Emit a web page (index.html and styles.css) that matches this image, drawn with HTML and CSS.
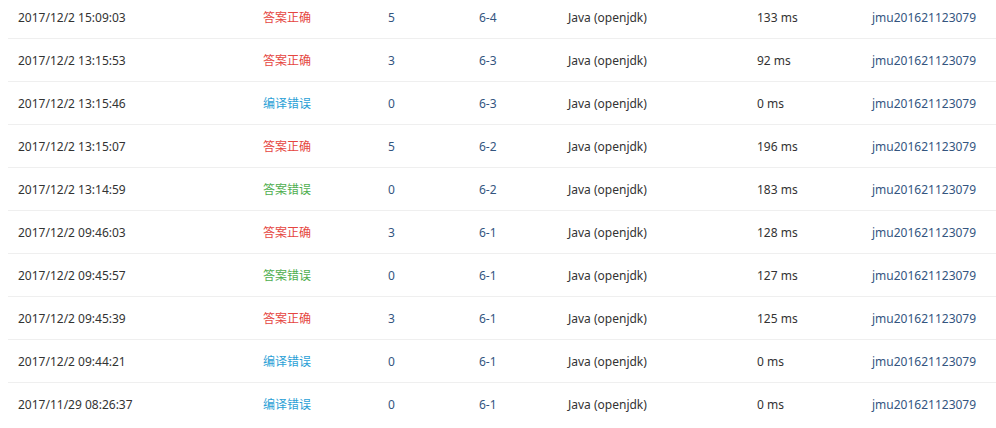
FILE: index.html
```html
<!DOCTYPE html>
<html>
<head>
<meta charset="utf-8">
<link rel="stylesheet" href="styles.css">
</head>
<body>
<div class="table">
  <div class="row"><span class="cell time">2017/12/2 15:09:03</span><span class="cell status ok">答案正确</span><span class="cell link">5</span><span class="cell link">6-4</span><span class="cell">Java (openjdk)</span><span class="cell">133 ms</span><span class="cell link">jmu201621123079</span></div>
  <div class="row"><span class="cell time">2017/12/2 13:15:53</span><span class="cell status ok">答案正确</span><span class="cell link">3</span><span class="cell link">6-3</span><span class="cell">Java (openjdk)</span><span class="cell">92 ms</span><span class="cell link">jmu201621123079</span></div>
  <div class="row"><span class="cell time">2017/12/2 13:15:46</span><span class="cell status ce">编译错误</span><span class="cell link">0</span><span class="cell link">6-3</span><span class="cell">Java (openjdk)</span><span class="cell">0 ms</span><span class="cell link">jmu201621123079</span></div>
  <div class="row"><span class="cell time">2017/12/2 13:15:07</span><span class="cell status ok">答案正确</span><span class="cell link">5</span><span class="cell link">6-2</span><span class="cell">Java (openjdk)</span><span class="cell">196 ms</span><span class="cell link">jmu201621123079</span></div>
  <div class="row"><span class="cell time">2017/12/2 13:14:59</span><span class="cell status wa">答案错误</span><span class="cell link">0</span><span class="cell link">6-2</span><span class="cell">Java (openjdk)</span><span class="cell">183 ms</span><span class="cell link">jmu201621123079</span></div>
  <div class="row"><span class="cell time">2017/12/2 09:46:03</span><span class="cell status ok">答案正确</span><span class="cell link">3</span><span class="cell link">6-1</span><span class="cell">Java (openjdk)</span><span class="cell">128 ms</span><span class="cell link">jmu201621123079</span></div>
  <div class="row"><span class="cell time">2017/12/2 09:45:57</span><span class="cell status wa">答案错误</span><span class="cell link">0</span><span class="cell link">6-1</span><span class="cell">Java (openjdk)</span><span class="cell">127 ms</span><span class="cell link">jmu201621123079</span></div>
  <div class="row"><span class="cell time">2017/12/2 09:45:39</span><span class="cell status ok">答案正确</span><span class="cell link">3</span><span class="cell link">6-1</span><span class="cell">Java (openjdk)</span><span class="cell">125 ms</span><span class="cell link">jmu201621123079</span></div>
  <div class="row"><span class="cell time">2017/12/2 09:44:21</span><span class="cell status ce">编译错误</span><span class="cell link">0</span><span class="cell link">6-1</span><span class="cell">Java (openjdk)</span><span class="cell">0 ms</span><span class="cell link">jmu201621123079</span></div>
  <div class="row"><span class="cell time">2017/11/29 08:26:37</span><span class="cell status ce">编译错误</span><span class="cell link">0</span><span class="cell link">6-1</span><span class="cell">Java (openjdk)</span><span class="cell">0 ms</span><span class="cell link">jmu201621123079</span></div>
</div>
</body>
</html>
```

FILE: styles.css
```css
html, body {
  margin: 0;
  padding: 0;
  background: #fff;
}
body {
  font-family: "Noto Sans", "Noto Sans CJK SC", sans-serif;
  font-size: 12px;
  color: #333;
  overflow: hidden;
}
.table {
  margin-top: -4px;
  padding-left: 8px;
}
.row {
  display: grid;
  grid-template-columns: 245px 125px 91px 89px 189px 115px 1fr;
  height: 42px;
  align-items: center;
  border-bottom: 1px solid #efefef;
}
.row:last-child {
  border-bottom: none;
}
.cell {
  padding-left: 10px;
  white-space: nowrap;
}
.link {
  color: #34557f;
}
.ok {
  color: #e5463f;
}
.wa {
  color: #4eae4e;
}
.ce {
  color: #2a9fd6;
}
```
